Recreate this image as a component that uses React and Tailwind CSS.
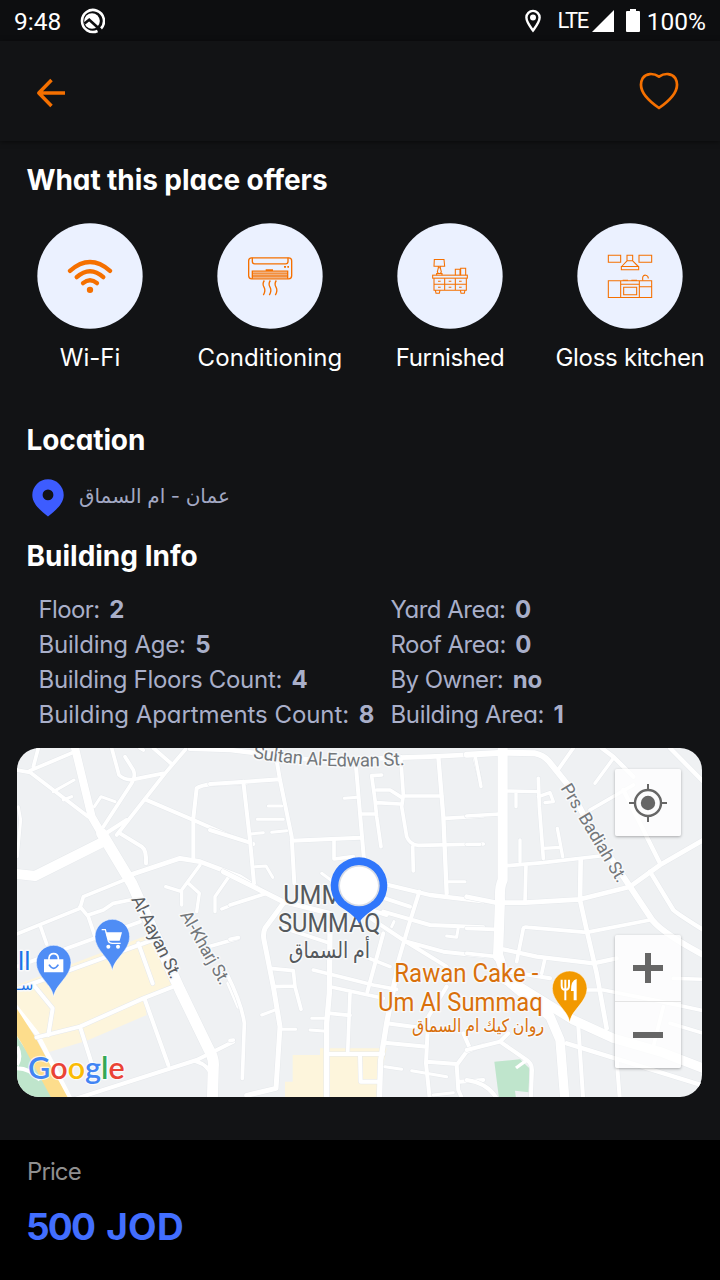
import React from "react";

const ORANGE = "#f57000";

// Amenity drawings share a 318-unit square centred on the disc.
const Disc = ({ cx, children, ...rest }) => (
  <svg viewBox={`${cx - 159} 39.5 318 318`} className="h-[106px] w-[106px]" fill="none" stroke={ORANGE} {...rest}>
    <circle cx={cx} cy="198.500" r="158" fill="#ebf1ff" stroke="none" />
    {children}
  </svg>
);

const WifiIcon = () => (
  <Disc cx={270} strokeLinecap="round" strokeWidth="13">
    <path d="M210 183Q270 130 330 183" />
    <path d="M230 202Q270 166 310 202" />
    <path d="M249 220Q270 202 291 220" />
    <circle cx="270" cy="240" r="9.500" fill={ORANGE} stroke="none" />
  </Disc>
);

const AirConditionerIcon = () => (
  <Disc cx={810} strokeWidth="4">
    <rect x="746" y="144" width="129" height="63" rx="9" />
    <path d="M757 144V155Q757 162 764 162H857Q864 162 864 155V144" />
    <path d="M757 207V184H863V207M757 190H863M757 196H863M757 201H863M797 180H819" />
    <path d="M852 171H858M862 171H867" strokeWidth="5" />
    <path d="M793 212Q786 222 792 232T790 256M811 212Q804 222 810 232T808 256M829 212Q822 222 828 232T826 256" />
  </Disc>
);

const DresserIcon = () => (
  <Disc cx={270} strokeWidth="3.200">
    <path d="M223 149H252L254 169H222ZM235 170V174H241V170M235 174L232 186L235 191H241L244 186L241 174M230 196V191H246V196" />
    <path d="M286 196V178H300V196M302 196V175H317V196M300 181H302" />
    <rect x="218" y="196" width="104" height="9" />
    <path d="M222 205V241H319V205M254 205V241M286 205V241M222 223H319" />
    <path d="M234 214H242M266 214H274M297 214H305M234 232H242M266 232H274M297 232H305" />
    <path d="M226 241L228 250H238L240 241M301 241L303 250H313L315 241" />
  </Disc>
);

const KitchenIcon = () => (
  <Disc cx={810} strokeWidth="3.200">
    <path d="M745 136H782V157H745ZM837 136H875V157H837Z" />
    <path d="M801 153V136H818V153M801 153L785 170M818 153L835 170M801 153H818M784 170H836V180H784Z" />
    <path d="M745 213H875V263H745ZM782 213V263M838 213V263M782 223H838M838 231H875" />
    <path d="M791 232H830V255H791ZM788 211H804M814 211H831M848 212V203Q849 195 857 196Q865 197 865 206" />
  </Disc>
);

const amenities = [
  { label: "Wi-Fi", Icon: WifiIcon, track: "tracking-[0px]" },
  { label: "Conditioning", Icon: AirConditionerIcon, track: "tracking-[0.1px]" },
  { label: "Furnished", Icon: DresserIcon, track: "tracking-[-0.45px]" },
  { label: "Gloss kitchen", Icon: KitchenIcon, track: "tracking-[-0.3px]" },
];

const leftFacts = [
  ["Floor:", "2", "tracking-[-0.6px]"],
  ["Building Age:", "5", "tracking-[-0.2px]"],
  ["Building Floors Count:", "4", "tracking-[-0.29px]"],
  ["Building Apartments Count:", "8", "tracking-[-0.06px]"],
];
const rightFacts = [
  ["Yard Area:", "0", "tracking-[-0.5px]"],
  ["Roof Area:", "0", "tracking-[-0.5px]"],
  ["By Owner:", "no", "tracking-[-0.6px]"],
  ["Building Area:", "1", "tracking-[-0.35px]"],
];

// Streets are grouped by map section; each entry is [stroke width, path].
const west = [
  [9, "M160 155L222 120M190 180L215 170M283 200L303 170L345 185M55 200L62 240L52 350"],
  [11, "M50 90L90 97L265 230M90 92L225 35M100 80L115 24M375 50L400 90Q408 110 395 130L310 260M335 24L357 105Q375 122 400 118L490 100M560 24L495 100L350 285M460 24L515 72M420 24L430 30"],
  [12, "M435 178L580 240L690 288L760 312M580 355L580 235L590 145Q600 136 640 132L740 128M310 285L380 240M360 280L425 320Q440 330 438 370"],
  [14, "M390 405L540 355L600 365L720 410L790 455"],
  [10, "M600 375L545 450L545 495M497 440L545 455M565 430L598 460L590 515M690 405L645 470L645 515M665 507L720 485"],
  [11, "M50 582L240 505L250 470L385 415M240 500L265 530L285 590M265 525L310 510L340 490L390 480M120 555L140 612M50 680L420 545M620 622L715 595"],
  [12, "M50 748L430 610L480 592M415 610L458 730M110 892L240 860L430 775L520 740M105 740L158 805L145 885M240 860L275 970M435 780L505 975M200 1085L590 960L700 905M590 965Q625 975 637 1010M685 730L715 800"],
  [24, "M225 24L275 230L310 290"],
  [30, "M50 402L105 408L310 305"],
  [33, "M305 280L395 430L540 750L625 925Q643 955 640 980L637 1085"],
];
const central = [
  [14, "M-120 26L0 30L100 42L300 66L420 56L600 50L760 42"],
  [12, "M138 50L150 120L185 290L193 430M-60 132L0 128L150 118M40 125L60 300L72 430M185 302L390 293M-60 270L60 308M378 80L390 220L402 360"],
  [9, "M115 198L155 198M82 238L160 238M125 277L170 272M60 282L100 278M75 380L108 378L128 412M343 175L383 172M275 400L330 440M245 835L290 835M240 870L290 874M155 868L197 868M95 825L140 808M655 425L705 425M650 588L680 592L685 562M485 560L492 545M545 992L650 1010M465 980L515 988M610 1065L670 1058"],
  [11, "M395 222L435 222M312 300L312 357L370 350M455 105L425 107L435 180L440 230L453 320M440 150L480 150L515 172M440 188L510 192M512 50L520 165L515 200L530 290Q540 315 565 316L760 312M520 168L635 168M645 235L760 228M730 40L750 120M548 320L550 393M0 598L25 593M0 902L10 900"],
  [13, "M625 50L640 230L650 460M475 435L600 465L760 484"],
  [15, "M-20 395L100 455L160 485L300 520M160 490L105 565Q98 580 102 600L130 740L150 860L138 1045L50 1066"],
  [11, "M0 495L110 460M120 685L190 692L195 740L213 808M130 740L190 738M-10 700Q35 790 43 850L37 1015"],
  [12, "M568 455L535 560L500 680L490 760M460 580L412 755M465 475L540 500M460 515L600 555L760 562M400 520L520 600L650 680M530 605L640 635L760 648M390 500L470 525"],
  [11, "M250 690L430 735L500 748M380 640L480 680M300 740L460 775M360 760L353 940M300 820L360 826M150 560L300 610"],
  [16, "M300 570L298 760L290 850L290 1085M495 720L470 850L452 960L448 1085"],
  [12, "M290 942L460 942M390 945L392 1025L445 1025M470 850L560 862M465 908L590 920M650 740L595 830L588 970L600 1085M590 965L680 972M760 915L710 935L680 975L685 1050L700 1085M690 1025L760 1020M700 880L720 925"],
];
const east = [
  [10, "M-10 313L30 313M15 45L33 140M110 153L205 155M138 160L138 200M205 170L240 158L250 185L225 188M262 265L278 350M220 325L270 322M150 300L150 365M430 55L375 130"],
  [11, "M-10 228L90 222M205 115L208 200L220 355M110 377L220 368L390 348M168 375L165 485M265 88L310 24M360 210L490 135M-10 565L75 568M-10 640L80 650M140 665L160 565Q160 560 175 562L350 577L540 540M215 700L225 655M350 750L400 750L560 782L700 812M610 715L700 718M550 920L580 800M600 850L700 880"],
  [13, "M395 24L430 50L490 110M460 150L570 370M600 24L700 125M540 395L610 510Q620 520 700 570M100 628L200 650L370 670L440 655M290 910L700 1037"],
  [14, "M-10 470L80 488L165 488L330 478L480 440L570 375L700 300M332 360L330 480L350 570L380 700L410 865"],
  [12, "M325 860L340 1085M440 960L450 1085M-10 930L90 905L170 960Q186 970 186 990L182 1085M-10 1020Q60 1030 85 1085M90 905L115 880M85 690L240 715"],
  [18, "M-10 44L100 38L195 40Q220 45 235 62L290 130L360 260L480 440L540 530Q560 570 700 645"],
  [30, "M98 24L98 420Q88 440 90 480L84 650"],
  [28, "M84 640L110 720L240 830L270 900L285 1085M85 710L140 735L310 840L430 895L570 935L700 985"],
];

const Streets = ({ data }) => (
  <g fill="none" strokeLinejoin="round" strokeLinecap="round">
    {data.map(([w, d]) => <path key={"c" + d} d={d} stroke="#e6e9ec" strokeWidth={w + 3} />)}
    {data.map(([w, d]) => <path key={d} d={d} stroke="#fff" strokeWidth={w} />)}
  </g>
);

const Pin = ({ x, y, color, children }) => (
  <g transform={`translate(${x} ${y})`}>
    <path d="M0 102C-4 66 -52 42 -52 0A52 52 0 1 1 52 0C52 42 4 66 0 102Z" fill={color} stroke="#fff" strokeOpacity=".5" strokeWidth="3" />
    {children}
  </g>
);

const MapDrawing = () => (
  <svg viewBox="51 24 2055 1047" className="block h-[349px] w-[685px]" preserveAspectRatio="none">
    <rect x="51" y="24" width="2056" height="1050" fill="#eff1f3" />
    <path d="M51 735L430 590L460 602L522 738L432 775L440 825L260 902L140 938L51 800Z" fill="#fdf5dc" />
    <path d="M878 945H960V925H1160L1130 1075H855V1025H878Z" fill="#fdf5dc" />
    <path d="M51 890Q120 990 165 1075H51Z" fill="#bfe5cc" />
    <path d="M1483 965L1560 958L1588 985L1586 1057L1545 1052L1548 1075H1497Z" fill="#bfe5cc" />
    <path d="M35 785L110 880L215 1085" stroke="#fff" strokeWidth="14" fill="none" />
    <path d="M30 815L85 900L185 1085" stroke="#fddd8c" strokeWidth="44" fill="none" />
    <path d="M51 985Q90 985 120 1020M51 920Q65 950 51 975" stroke="#fff" strokeWidth="12" fill="none" />
    <Streets data={west} />
    <g transform="translate(690 0)"><Streets data={central} /></g>
    <g transform="translate(1410 0)"><Streets data={east} /></g>
    <path d="M1578 962L1548 984" stroke="#fff" strokeWidth="10" />

    <g className="font-[Roboto,'DejaVu_Sans',sans-serif]" stroke="#f8f9fa" strokeWidth="9" strokeLinejoin="round" paintOrder="stroke">
      <path id="sultan" d="M758 54Q990 92 1222 74" fill="none" stroke="none" />
      <text fontSize="55" fill="#73777b"><textPath href="#sultan" textLength="458">Sultan Al-Edwan St.</textPath></text>
      <text transform="translate(393 478) rotate(63.500)" fontSize="54" fill="#5a5d61" textLength="270">Al-Aayan St.</text>
      <text transform="translate(539 525) rotate(60)" fontSize="53" fill="#73777b" textLength="246">Al-Kharj St.</text>
      <text transform="translate(1681 144) rotate(59)" fontSize="53" fill="#73777b" textLength="335">Prs. Badiah St.</text>
      <g fontSize="76" fill="#55595d">
        <text x="850" y="491" textLength="180" lengthAdjust="spacingAndGlyphs">UMM</text>
        <text x="834" y="576" textLength="308" lengthAdjust="spacingAndGlyphs">SUMMAQ</text>
        <text x="866" y="654" fontSize="66" textLength="244" lengthAdjust="spacingAndGlyphs">أم السماق</text>
      </g>
      <g fontSize="76" fill="#d9700b">
        <text x="1183" y="726" textLength="432" lengthAdjust="spacingAndGlyphs">Rawan Cake -</text>
        <text x="1134" y="812" textLength="494" lengthAdjust="spacingAndGlyphs">Um Al Summaq</text>
        <text x="1236" y="876" fontSize="54" textLength="396" lengthAdjust="spacingAndGlyphs">روان كيك ام السماق</text>
      </g>
      <text x="54" y="690" fontSize="76" fill="#1a73e8">ll</text>
      <text x="50" y="750" fontSize="44" fill="#1a73e8">سـ</text>
    </g>

    <Pin x={161} y={668} color="#4f8df5">
      <path d="M-29 -10H29V29H-29Z" fill="#fff" />
      <path d="M-14 -8V-14Q-12 -27 0 -27T14 -14V-8" fill="none" stroke="#fff" strokeWidth="5" />
      <path d="M-14 6Q0 28 14 6" fill="none" stroke="#4f8df5" strokeWidth="5" />
    </Pin>
    <Pin x={337} y={590} color="#4f8df5">
      <path d="M-32 -21H-21L-12 13Q-9 20 0 20H25" fill="none" stroke="#fff" strokeWidth="4" />
      <path d="M-20 -13H29L22 12H-12Z" fill="#fff" />
      <circle cx="-12" cy="30" r="6" fill="#fff" /><circle cx="17" cy="30" r="6" fill="#fff" />
    </Pin>
    <Pin x={1709} y={745} color="#f29900">
      <path d="M-24 -26V-8Q-24 4 -13 5Q-2 4 -2 -8V-26M-13 -26V36" fill="none" stroke="#fff" strokeWidth="6" />
      <path d="M21 -28Q3 -24 4 8H12V36H21Z" fill="#fff" />
    </Pin>

    <path d="M1077 551C1070 530 1037 512 1015 495A85 85 0 1 1 1139 495C1117 512 1084 530 1077 551Z" fill="#2f76fb" />
    <circle cx="1077" cy="437" r="62" fill="#d9dde5" />
    <circle cx="1077" cy="437" r="57" fill="#fff" />

    <text x="84" y="1016" fontSize="92" fontWeight="600" textLength="290" className="font-[Lato,sans-serif]" stroke="#fff" strokeOpacity=".7" strokeWidth="7" paintOrder="stroke" strokeLinejoin="round" lengthAdjust="spacingAndGlyphs">
      <tspan fill="#4285f4">G</tspan><tspan fill="#ea4335">o</tspan><tspan fill="#fbbc05">o</tspan><tspan fill="#4285f4">g</tspan><tspan fill="#34a853">l</tspan><tspan fill="#ea4335">e</tspan>
    </text>
  </svg>
);

const FactList = ({ facts }) => (
  <dl className="flex flex-col text-[24px] leading-[35px] text-[#a9afc9]">
    {facts.map(([name, value, track]) => (
      <div key={name} className="flex gap-[9.5px] whitespace-nowrap">
        <dt className={track}>{name}</dt>
        <dd className="font-bold">{value}</dd>
      </div>
    ))}
  </dl>
);

export default function App() {
  return (
    <div className="flex h-[1280px] w-[720px] flex-col overflow-hidden bg-[#121315] font-[Inter,'DejaVu_Sans',sans-serif] text-white [font-feature-settings:'cv11']">
      <div className="flex h-[41px] shrink-0 items-center bg-[#0d0e10] pt-[3px] pr-[14px] pl-[14px] font-[Roboto,sans-serif] text-[24.5px] leading-none">
        <span>9:48</span>
        <svg viewBox="0 0 26 26" className="-mt-[3px] ml-[18px] h-[26px] w-[26px]" fill="none">
          <path d="M22 20.500A11 11 0 1 0 18.500 23" stroke="#fff" strokeWidth="2.600" />
          <circle cx="13" cy="13" r="7.800" fill="#fff" />
          <path d="M5.500 15.500L10.200 11.800L21.500 22" stroke="#0d0e10" strokeWidth="2.600" />
        </svg>
        <svg viewBox="0 0 16 24" className="-mt-[2px] ml-auto h-[24px] w-[16px]" fill="none">
          <path d="M8 21.500C5.500 18 1.400 13 1.400 8.500A6.600 6.600 0 0 1 14.600 8.500C14.600 13 10.500 18 8 21.500Z" stroke="#fff" strokeWidth="2.400" />
          <circle cx="8" cy="8.500" r="3" fill="#fff" />
        </svg>
        <span className="-mt-[3px] ml-[16px] text-[22px] tracking-[-1.4px]">LTE</span>
        <svg viewBox="0 0 22 22" className="-mt-[3px] ml-[4px] h-[22px] w-[22px]"><path d="M0 22H22V0Z" fill="#fff" /></svg>
        <svg viewBox="0 0 14 23" className="-mt-[3px] ml-[12px] h-[23px] w-[14px]">
          <path d="M1 2H4V0H10V2H13Q14 2 14 3V22Q14 23 13 23H1Q0 23 0 22V3Q0 2 1 2Z" fill="#fff" />
        </svg>
        <span className="ml-[7px]">100%</span>
      </div>

      <header className="flex h-[100px] shrink-0 items-center justify-between pr-[41px] pl-[36px] shadow-[0_1px_5px_rgba(0,0,0,0.5)]">
        <button aria-label="Back">
          <svg viewBox="0 0 30 30" className="mt-[3px] h-[30px] w-[30px]" fill="none" stroke={ORANGE} strokeWidth="3.500">
            <path d="M15.500 2L2.800 15L15.500 28M2.800 15H29" strokeLinejoin="round" />
          </svg>
        </button>
        <button aria-label="Favourite">
          <svg viewBox="0 0 40 38" className="h-[38px] w-[40px]" fill="none" stroke={ORANGE} strokeWidth="2.700" strokeLinejoin="round">
            <path d="M20 4.700C14 .5 7 1.300 3.700 6.200C-1 15 4 25 20 36C36 25 41 15 36.300 6.200C33 1.300 26 .5 20 4.700Z" />
          </svg>
        </button>
      </header>

      <main className="flex flex-1 flex-col">
        <h2 className="mt-[21px] ml-[26.5px] text-[28px] leading-[36px] font-bold tracking-[-0.08px] whitespace-nowrap">What this place offers</h2>
        <div className="mt-[25px] grid grid-cols-4">
          {amenities.map(({ label, Icon, track }) => (
            <div key={label} className="flex flex-col items-center">
              <Icon />
              <span className={`mt-[13px] text-[24px] leading-[32px] whitespace-nowrap ${track}`}>{label}</span>
            </div>
          ))}
        </div>

        <h2 className="mt-[48px] ml-[26.5px] text-[28px] leading-[36px] font-bold tracking-[-0.1px]">Location</h2>
        <div className="mt-[20px] ml-[32px] flex h-[39px] items-center">
          <svg viewBox="0 0 32 38" className="h-[38px] w-[32px]">
            <path fillRule="evenodd" d="M16 37.500C9 32 .3 25 .3 16A15.700 15.700 0 0 1 31.700 16C31.700 25 23 32 16 37.500ZM16 10.500A5.400 5.400 0 1 0 16 21.300A5.400 5.400 0 1 0 16 10.500Z" fill="#3d5cff" />
          </svg>
          <span dir="rtl" className="-mt-[3px] ml-[15px] text-[20px] leading-[32px] whitespace-nowrap text-[#a2a8c3]">عمان - ام السماق</span>
        </div>
        <h2 className="mt-[21px] ml-[26.5px] text-[28px] leading-[36px] font-bold">Building Info</h2>

        <div className="mt-[18px] ml-[38.5px] grid grid-cols-[352px_1fr]">
          <FactList facts={leftFacts} />
          <FactList facts={rightFacts} />
        </div>

        <div className="relative mt-[16px] ml-[17px] h-[349px] w-[685px] overflow-hidden rounded-[22px]">
          <MapDrawing />
          <button aria-label="My location" className="absolute top-[21px] right-[21px] flex h-[67px] w-[66px] items-center justify-center rounded-[2px] bg-white/80 shadow-[0_1px_3px_rgba(0,0,0,0.3)]">
            <svg viewBox="0 0 38 38" className="h-[38px] w-[38px]" fill="none" stroke="#666">
              <circle cx="19" cy="19" r="13" strokeWidth="2.400" /><circle cx="19" cy="19" r="7.200" fill="#666" stroke="none" />
              <path d="M19 0V6M19 32V38M0 19H6M32 19H38" strokeWidth="2" />
            </svg>
          </button>
          <div className="absolute right-[21px] bottom-[29px] flex w-[66px] flex-col divide-y divide-[#e4e4e4] rounded-[2px] bg-white/80 shadow-[0_1px_3px_rgba(0,0,0,0.3)]">
            <button aria-label="Zoom in" className="flex h-[67px] items-center justify-center">
              <svg viewBox="0 0 30 30" className="h-[30px] w-[30px]"><path d="M0 12H12V0H18V12H30V18H18V30H12V18H0Z" fill="#666" /></svg>
            </button>
            <button aria-label="Zoom out" className="flex h-[66px] items-center justify-center">
              <svg viewBox="0 0 30 6" className="h-[6px] w-[30px]"><path d="M0 0H30V6H0Z" fill="#666" /></svg>
            </button>
          </div>
        </div>
      </main>

      <footer className="flex h-[140px] shrink-0 flex-col bg-black pl-[27px]">
        <span className="mt-[16px] text-[24px] leading-[32px] tracking-[-0.9px] text-[#8f8f8f]">Price</span>
        <span className="mt-[17px] -ml-px flex gap-[12px] text-[37px] leading-[44px] font-bold text-[#426eff]">
          <span className="tracking-[-1.8px]">500</span>
          <span className="tracking-[0.3px]">JOD</span>
        </span>
      </footer>
    </div>
  );
}
